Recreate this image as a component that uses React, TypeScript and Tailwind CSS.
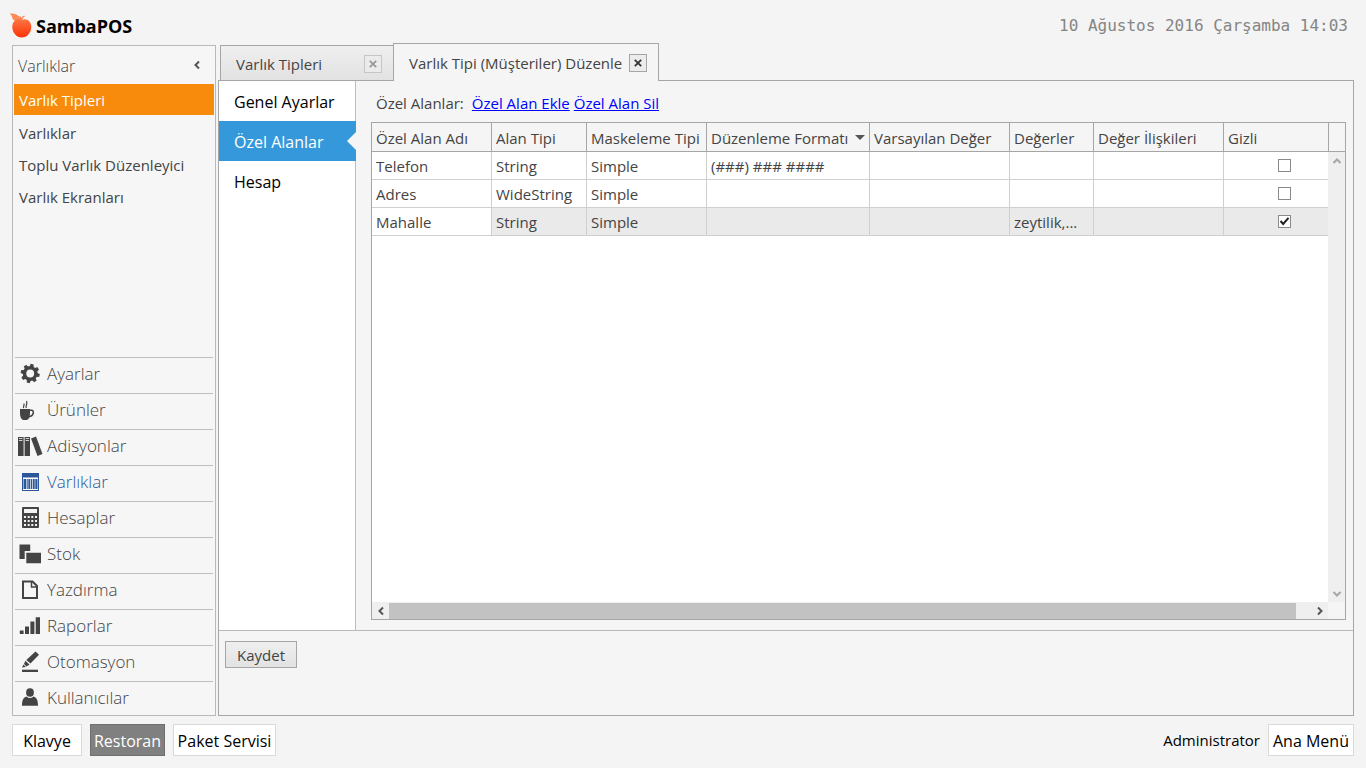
import { useState } from "react";
import type { ReactNode } from "react";
import clsx from "clsx";

const menuItems = ["Varlık Tipleri", "Varlıklar", "Toplu Varlık Düzenleyici", "Varlık Ekranları"];

const icons: Record<string, ReactNode> = {
  Ayarlar: (
    <g>
      <circle cx="13.2" cy="13.5" r="5.7" fill="none" stroke="currentColor" strokeWidth="3.6" />
      {[0, 45, 90, 135, 180, 225, 270, 315].map((a) => (
        <path key={a} d="M11.2 7.5 L11.6 4 H14.8 L15.2 7.5Z" transform={`rotate(${a + 12} 13.2 13.5)`} />
      ))}
    </g>
  ),
  Ürünler: (
    <g>
      <path d="M3 13H13V17C13 21 11.5 24 9.5 24H6.5C4.500 24 3 21 3 17Z" />
      <path d="M12.500 14.300H14.500C17.500 14.300 17 20 12 20.800" fill="none" stroke="currentColor" strokeWidth="1.500" />
      <path d="M6.800 12C5.500 10.500 8 9.500 6.800 7.500M9.300 12C8 9.800 11 8.500 9.500 5" fill="none" stroke="currentColor" strokeWidth="1.200" />
    </g>
  ),
  Adisyonlar: (
    <g>
      <path d="M1 5H6.600V24H1ZM7.600 5H13V24H7.600Z" />
      <path d="M14 6.500L19 4.500L25.500 22L20.500 24Z" />
      <path d="M2 6.500H5.500M2 8.500H5.500M8.600 6.500H12M8.600 8.500H12" stroke="#f5f5f5" strokeWidth="0.800" />
    </g>
  ),
  Varlıklar: (
    <g>
      <path d="M5 5H22V23H5Z" />
      <path d="M6 9.500H21V22H6Z" fill="#fff" />
      <path d="M6.500 11H9V21H6.500ZM9.600 11H10.700V21H9.600ZM11.300 11H13.300V21H11.300ZM14 11H15V21H14ZM15.700 11H17.700V21H15.700ZM18.300 11H20.500V21H18.300Z" />
    </g>
  ),
  Hesaplar: (
    <g>
      <path d="M6 3H21Q22 3 22 4V23Q22 24 21 24H6Q5 24 5 23V4Q5 3 6 3Z" />
      <path
        d="M7 5H20V9H7ZM7 12H9V14H7ZM10.700 12H12.700V14H10.700ZM14.300 12H16.300V14H14.300ZM18 12H20V14H18ZM7 16H9V18H7ZM10.700 16H12.700V18H10.700ZM14.300 16H16.300V18H14.300ZM18 16H20V18H18ZM7 20H9V22H7ZM10.700 20H12.700V22H10.700ZM14.300 20H16.300V22H14.300ZM18 20H20V22H18Z"
        fill="#f5f5f5"
      />
    </g>
  ),
  Stok: <path d="M2.500 4.500H13.200V11H7.700V19H2.500ZM9.300 12.700H24V23.300H9.300Z" />,
  Yazdırma: (
    <g fill="none" stroke="currentColor">
      <path d="M6 5.500H15.500L20 10V22H6Z" strokeWidth="2" />
      <path d="M14.500 5.500V11H20" strokeWidth="1.500" />
    </g>
  ),
  Raporlar: <path d="M2.800 18.500H6.600V22H2.800ZM8 14.500H12V22H8ZM13.400 9.500H17.400V22H13.400ZM18.700 5.300H23V22H18.700Z" />,
  Otomasyon: (
    <g>
      <path d="M18.500 3.500L22 6.800L13.500 15.500L9.300 12ZM8.400 12.800L12.500 16.500L9.500 18.500L7 16ZM6.400 16.600L8.800 19L5 19.500Z" />
      <path d="M5 21.700H21V24H5Z" />
    </g>
  ),
  Kullanıcılar: (
    <g>
      <ellipse cx="13" cy="8.500" rx="3.900" ry="4.300" />
      <path d="M9.500 12.500Q13 15.500 16.500 12.500C19.500 13.300 21 16 21 21.700H5C5 16 6.500 13.300 9.500 12.500Z" />
    </g>
  ),
};

const modules = Object.keys(icons);

const columns = [
  { name: "Özel Alan Adı", width: "w-[120px]" },
  { name: "Alan Tipi", width: "w-[95px]" },
  { name: "Maskeleme Tipi", width: "w-[120px]" },
  { name: "Düzenleme Formatı", width: "w-[163px]", sorted: true },
  { name: "Varsayılan Değer", width: "w-[140px]" },
  { name: "Değerler", width: "w-[84px]" },
  { name: "Değer İlişkileri", width: "w-[130px]" },
  { name: "Gizli", width: "" },
];

const rows = [
  { cells: ["Telefon", "String", "Simple", "(###) ### ####", "", "", ""], hidden: false },
  { cells: ["Adres", "WideString", "Simple", "", "", "", ""], hidden: false },
  { cells: ["Mahalle", "String", "Simple", "", "", "zeytilik,...", ""], hidden: true },
];

function Logo() {
  return (
    <svg width="24" height="26" viewBox="0 0 24 26" aria-hidden="true">
      <defs>
        <linearGradient id="apple" x1="0" y1="0" x2="0" y2="1">
          <stop offset="0" stopColor="#ff7442" />
          <stop offset="1" stopColor="#fa3408" />
        </linearGradient>
      </defs>
      <path d="M0.500 0.500C6 0 11 1.500 12 8C7 9.500 3.500 7.500 3.200 4.500C3 2.500 1.800 1.500 0.500 0.500Z" fill="#ff8a55" />
      <path d="M12.300 8.500C12.300 5.500 13.500 4 15.500 3M12.300 7L11 3.500" fill="none" stroke="#ff7a45" strokeWidth="1.300" />
      <path d="M12.800 7C18 4.800 22.300 8.500 22.300 14C22.300 19.500 18 24.500 12.800 24.500C7.500 24.500 3.300 19.500 3.300 14C3.300 8.500 7.500 4.800 12.800 7Z" fill="url(#apple)" />
    </svg>
  );
}

function Chevron({ d, className }: { d: string; className?: string }) {
  return (
    <svg width="10" height="10" viewBox="0 0 10 10" className={className} fill="none" stroke="currentColor" strokeWidth="2" aria-hidden="true">
      <path d={d} />
    </svg>
  );
}

function CloseButton({ label, dim }: { label: string; dim?: boolean }) {
  return (
    <button
      aria-label={label}
      className={clsx(
        "flex size-[18px] shrink-0 items-center justify-center border",
        dim ? "border-[#c6c6c6] bg-[#ebebeb] text-[#999]" : "border-[#a6a6a6] bg-[#ececec] text-[#333]",
      )}
    >
      <svg width="8" height="8" viewBox="0 0 8 8" stroke="currentColor" strokeWidth="1.800" aria-hidden="true">
        <path d="M0.800 0.800L7.200 7.200M7.200 0.800L0.800 7.200" />
      </svg>
    </button>
  );
}

function Sidebar() {
  const [active, setActive] = useState("Varlık Tipleri");

  return (
    <aside className="mt-0.5 flex w-[204px] shrink-0 flex-col border border-[#b9b9b9] bg-[#f6f6f6] px-px">
      <div className="flex h-[38px] items-center justify-between pr-3 pl-1">
        <h2 className="pt-0.5 text-[16px] font-light text-[#444]">Varlıklar</h2>
        <button aria-label="Daralt" className="text-[#555]">
          <Chevron d="M7 1.500L3.500 5L7 8.500" />
        </button>
      </div>
      <ul>
        {menuItems.map((item) => (
          <li key={item}>
            <button
              onClick={() => setActive(item)}
              className={clsx(
                "w-full px-[5px] text-left",
                item === active ? "mb-0.5 h-[31px] bg-[#f88b0b] text-white" : "h-8",
              )}
            >
              {item}
            </button>
          </li>
        ))}
      </ul>
      <ul className="mt-auto px-px">
        {modules.map((name) => (
          <li key={name} className="h-9 border-t border-[#bdbdbd] last:h-[34px]">
            <button
              className={clsx(
                "flex w-full gap-1 pt-0.5 pl-0.5 text-left text-[17px] leading-7 font-light",
                name === "Varlıklar" ? "text-[#2b579a]" : "text-[#444]",
              )}
            >
              <svg width="26" height="28" viewBox="0 0 26 28" fill="currentColor" aria-hidden="true">
                {icons[name]}
              </svg>
              {name}
            </button>
          </li>
        ))}
      </ul>
    </aside>
  );
}

function HiddenCheck({ label, defaultChecked }: { label: string; defaultChecked: boolean }) {
  return (
    <label className="relative block size-[13px]">
      <input
        type="checkbox"
        aria-label={label}
        defaultChecked={defaultChecked}
        className="peer block size-[13px] appearance-none border border-[#8a8a8a] bg-white"
      />
      <svg viewBox="0 0 13 13" className="pointer-events-none absolute inset-0 hidden size-[13px] peer-checked:block" fill="none" stroke="#222" strokeWidth="2" aria-hidden="true">
        <path d="M2.500 6L5.200 9L10.500 2.800" />
      </svg>
    </label>
  );
}

function FieldGrid() {
  return (
    <div className="flex flex-1 border border-[#a6a6a6] bg-white">
      <div className="flex min-w-0 flex-1 flex-col">
        <table className="w-full table-fixed border-separate border-spacing-0 text-left">
          <thead>
            <tr>
              {columns.map((col) => (
                <th
                  key={col.name}
                  className={clsx(
                    "h-[29px] border-r border-b border-[#a6a6a6] bg-[#f5f5f5] pt-px pl-1 font-normal whitespace-nowrap last:border-r-0",
                    col.width,
                  )}
                >
                  <div className="flex items-center justify-between">
                    {col.name}
                    {col.sorted && (
                      <svg width="10" height="5" viewBox="0 0 10 5" className="mr-1" aria-hidden="true">
                        <path d="M0 0H10L5 5Z" fill="#555" />
                      </svg>
                    )}
                  </div>
                </th>
              ))}
            </tr>
          </thead>
          <tbody>
            {rows.map((row) => (
              <tr key={row.cells[0]}>
                {row.cells.map((cell, i) => (
                  <td
                    key={i}
                    className={clsx(
                      "h-7 truncate border-r border-b border-[#cfcfcf] pl-1",
                      row.hidden && i > 0 && "bg-[#eaeaea]",
                    )}
                  >
                    {cell}
                  </td>
                ))}
                <td className={clsx("h-7 border-b border-[#cfcfcf] pl-[54px]", row.hidden && "bg-[#eaeaea]")}>
                  <HiddenCheck label={`${row.cells[0]} gizli`} defaultChecked={row.hidden} />
                </td>
              </tr>
            ))}
          </tbody>
        </table>
        {/* Horizontal scrollbar */}
        <div className="mt-auto flex h-[17px] items-stretch bg-[#efefef] text-[#555]">
          <button aria-label="Sola kaydır" className="flex w-[17px] items-center justify-center">
            <Chevron d="M7 1.500L3.500 5L7 8.500" />
          </button>
          <div className="mt-px mr-[15px] flex-1 bg-[#c2c2c2]" />
          <button aria-label="Sağa kaydır" className="flex w-[17px] items-center justify-center">
            <Chevron d="M3 1.500L6.500 5L3 8.500" />
          </button>
        </div>
      </div>
      {/* Vertical scrollbar */}
      <div className="flex w-[17px] flex-col bg-[#f5f5f5] text-[#a6a6a6]">
        <div className="h-[29px] border-b border-l border-[#a6a6a6]" />
        <div className="flex flex-1 flex-col justify-between bg-[#efefef]">
          <button aria-label="Yukarı kaydır" className="flex h-[17px] items-center justify-center">
            <Chevron d="M1.500 7L5 3.500L8.500 7" />
          </button>
          <button aria-label="Aşağı kaydır" className="flex h-[17px] items-center justify-center">
            <Chevron d="M1.500 3L5 6.500L8.500 3" />
          </button>
        </div>
        <div className="h-[17px]" />
      </div>
    </div>
  );
}

function EditorPanel() {
  const [section, setSection] = useState("Özel Alanlar");

  return (
    <main className="flex min-w-0 flex-1 flex-col">
      <div className="ml-0.5 flex h-[37px] items-end">
        <div className="flex h-[35px] w-[173px] items-center justify-between border-t border-l border-[#a6a6a6] bg-linear-to-b from-[#efefef] to-[#e2e2e2] pt-px pr-[11px] pl-[15px]">
          <a href="#tipler">Varlık Tipleri</a>
          <CloseButton label="Varlık Tipleri sekmesini kapat" dim />
        </div>
        <div className="relative -mb-px flex h-[38px] w-[266px] items-center justify-between border border-b-0 border-[#a6a6a6] bg-[#f5f5f5] pr-[11px] pl-[15px] whitespace-nowrap">
          <a href="#duzenle">Varlık Tipi (Müşteriler) Düzenle</a>
          <CloseButton label="Düzenleme sekmesini kapat" />
        </div>
      </div>
      <div className="flex flex-1 flex-col border border-[#a6a6a6] bg-[#f5f5f5]">
        <div className="flex flex-1">
          <nav className="w-[137px] shrink-0 border-r border-[#bdbdbd] bg-white text-[16px] text-black">
            {["Genel Ayarlar", "Özel Alanlar", "Hesap"].map((name) => (
              <button
                key={name}
                onClick={() => setSection(name)}
                className={clsx(
                  "relative -mr-px block h-10 w-[137px] pt-0.5 pl-[15px] text-left",
                  name === section && "bg-[#3498db] text-white",
                )}
              >
                {name}
                {name === section && (
                  <svg width="9" height="18" viewBox="0 0 9 18" className="absolute top-[11px] right-0" aria-hidden="true">
                    <path d="M9 0V18L0 9Z" fill="#f5f5f5" />
                  </svg>
                )}
              </button>
            ))}
          </nav>
          <div className="flex min-w-0 flex-1 flex-col pr-[7px] pb-2.5 pl-[15px]">
            <div className="flex h-[41px] items-center gap-1 pt-0.5 pl-[5px]">
              <span className="mr-1">Özel Alanlar:</span>
              <a href="#ekle" className="text-[#0000ff] underline">Özel Alan Ekle</a>
              <a href="#sil" className="text-[#0000ff] underline">Özel Alan Sil</a>
            </div>
            <FieldGrid />
          </div>
        </div>
        <div className="h-[85px] border-t border-[#b9b9b9] pt-2.5 pl-1.5">
          <button className="h-[27px] w-[72px] border border-[#a6a6a6] bg-linear-to-b from-[#efefef] to-[#e2e2e2]">Kaydet</button>
        </div>
      </div>
    </main>
  );
}

export default function App() {
  return (
    <div className="flex min-h-screen flex-col bg-[#f4f4f4] px-3 font-['Open_Sans','Noto_Sans',sans-serif] text-[15px] leading-5 text-[#444]">
      <header className="flex h-[43px] items-center justify-between pt-2 pr-1.5">
        <div className="-ml-[3px] flex items-center gap-[3px]">
          <Logo />
          <h1 className="text-[18px] font-bold text-black">SambaPOS</h1>
        </div>
        <time dateTime="2016-08-10T14:03" className="font-['DejaVu_Sans_Mono',monospace] text-[16px] text-[#858585]">
          10 Ağustos 2016 Çarşamba 14:03
        </time>
      </header>
      <div className="flex flex-1 gap-0.5">
        <Sidebar />
        <EditorPanel />
      </div>
      <footer className="flex items-center gap-2 pt-2 pb-3 text-[16px] text-black">
        <button className="h-8 w-[70px] border border-[#d9d9d9] bg-white pt-0.5">Klavye</button>
        <button className="h-8 w-[75px] border border-[#6e6e6e] bg-[#808080] pt-0.5 text-white">Restoran</button>
        <button className="h-8 w-[103px] border border-[#d9d9d9] bg-white pt-0.5">Paket Servisi</button>
        <span className="ml-auto text-[15px]">Administrator</span>
        <button className="h-8 w-[86px] border border-[#d9d9d9] bg-white pt-0.5">Ana Menü</button>
      </footer>
    </div>
  );
}
